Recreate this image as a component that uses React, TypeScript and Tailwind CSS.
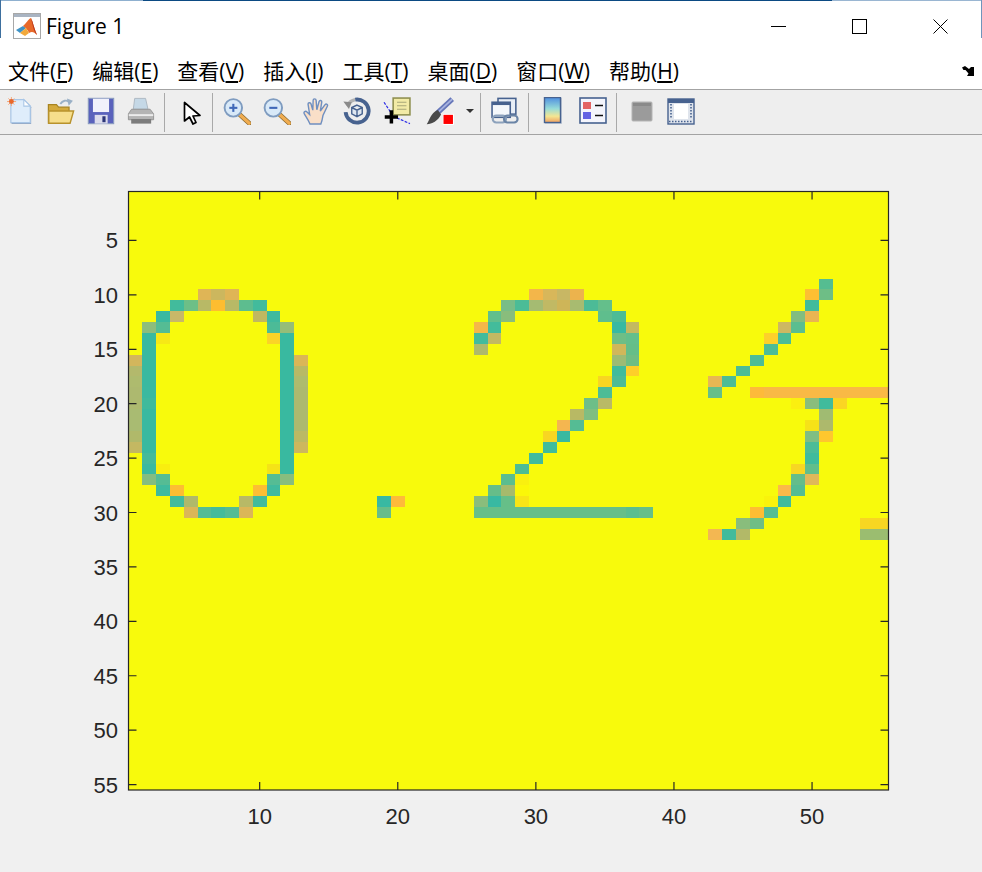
import type {ReactNode} from 'react'

const TEAL = '#39b9a0'

// image cells of the figure, row -> [column, colour]
const cells: Record<number, [number, string][]> = {
  9: [[51, '#55bd91']],
  10: [[6, '#dfb556'], [7, '#ccb75e'], [8, '#dfb556'], [30, '#f3b64a'], [31, '#d8b75a'], [32, '#c8b764'], [33, '#ecb34d'], [50, '#fdbf33'], [51, '#6ebe86']],
  11: [[4, '#42bb9c'], [5, '#6dbf87'], [6, '#b8b966'], [7, '#fdbd30'], [8, '#b8b966'], [9, '#5dbd8f'], [10, '#42bb9c'], [28, '#79bd87'], [29, '#4bbc97'], [30, '#a5bb72'], [31, '#c1b964'], [32, '#ceb558'], [33, '#a8bb70'], [34, '#4cbb97'], [35, '#64bf8b'], [50, '#41bb9c']],
  12: [[3, '#3ab9a0'], [4, '#c8b868'], [10, '#c0b860'], [11, '#3fba9e'], [27, '#62bf8c'], [28, '#89bd7c'], [35, '#5fbe8d'], [36, '#4cbc96'], [49, '#82bd80'], [50, '#e9b552']],
  13: [[2, '#8dbd7c'], [3, '#55bc94'], [11, '#4cbb97'], [12, '#95bd78'], [26, '#f5b749'], [27, '#43bc9b'], [36, '#38b9a2'], [37, '#c4b960'], [48, '#cdb862'], [49, '#5bbe90']],
  14: [[2, TEAL], [3, '#f7e816'], [11, '#fbd327'], [12, TEAL], [26, '#42bb9c'], [27, '#c2b963'], [36, '#6fbe85'], [37, '#64bf8b'], [47, '#fdd02a'], [48, '#4cbc96']],
  15: [[2, TEAL], [12, TEAL], [26, '#aeb96c'], [36, '#d0b75a'], [37, '#65be88'], [47, '#4dbc96']],
  16: [[1, '#d3b65c'], [2, TEAL], [12, TEAL], [13, '#dab657'], [36, '#9dbb74'], [37, '#6fbd83'], [46, '#4dbc96']],
  17: [[1, '#b3b96c'], [2, TEAL], [12, TEAL], [13, '#b8b966'], [36, '#41bb9c'], [37, '#fecf29'], [45, '#4cbc96']],
  18: [[1, '#aebb6e'], [2, TEAL], [12, TEAL], [13, '#aebb6e'], [35, '#f8d522'], [36, '#4cbb97'], [43, '#e7b754'], [44, '#4cbc96']],
  19: [[1, '#adb96f'], [2, '#3ab9a0'], [12, TEAL], [13, '#adb96f'], [35, '#4dbc96'], [43, '#66bf89'], [46, '#fdba3a'], [47, '#f9b945'], [48, '#f9b945'], [49, '#f9b945'], [50, '#f9b945'], [51, '#f9b945'], [52, '#f9b945'], [53, '#f9b945'], [54, '#f9b945'], [55, '#f9b945']],
  20: [[1, '#adb96f'], [2, '#3fba9c'], [12, TEAL], [13, '#adb96f'], [34, '#6dbe88'], [35, '#b9ba66'], [49, '#fbef10'], [50, '#8abd7c'], [51, '#40bb9c'], [52, '#fad523']],
  21: [[1, '#a9bb72'], [2, TEAL], [12, TEAL], [13, '#adb96f'], [33, '#b8b964'], [34, '#7fbe82'], [51, '#a0bb72']],
  22: [[1, '#a9bb72'], [2, TEAL], [12, TEAL], [13, '#adb96f'], [32, '#f4b650'], [33, '#55bc94'], [50, '#f6e218'], [51, '#adb96c']],
  23: [[1, '#b0b96a'], [2, TEAL], [12, TEAL], [13, '#bbb964'], [31, '#f8d622'], [32, '#3ab9a0'], [50, '#7fbe83'], [51, '#fec72e']],
  24: [[1, '#c4b862'], [2, TEAL], [12, TEAL], [13, '#cdb75d'], [31, '#40bc9c'], [50, '#4cbc97']],
  25: [[2, '#45ba9a'], [12, TEAL], [30, '#40bb9d'], [50, '#40bb9c']],
  26: [[2, '#3bb9a0'], [3, '#f9ee0f'], [11, '#f5e317'], [12, TEAL], [29, '#4dbc94'], [49, '#f7d723'], [50, '#61be8b']],
  27: [[2, '#84bd80'], [3, '#55bc94'], [11, '#55bc94'], [12, '#88bd7e'], [28, '#5bbd8f'], [29, '#f9f00f'], [49, '#64bd8a'], [50, '#dfb85a']],
  28: [[3, '#3fba9e'], [4, '#fdbd33'], [10, '#fdbe33'], [11, '#40ba9e'], [27, '#66bd89'], [28, '#a6ba6c'], [29, '#fbf708'], [48, '#fbb94a'], [49, '#55bc93']],
  29: [[4, '#42bb9c'], [5, '#b0b96a'], [9, '#b8b966'], [10, '#42bb9c'], [19, '#38b9a2'], [20, '#feba3a'], [26, '#8abd7c'], [27, '#38b9a2'], [28, '#66bf88'], [29, '#f8e516'], [47, '#f9f30c'], [48, '#41bb9c']],
  30: [[5, '#dbb658'], [6, '#55bc94'], [7, '#45bb9a'], [8, '#55bc94'], [9, '#dbb658'], [19, '#67bd8a'], [26, '#66bf89'], [27, '#66bf89'], [28, '#66bf89'], [29, '#66bf89'], [30, '#66bf89'], [31, '#66bf89'], [32, '#66bf89'], [33, '#66bf89'], [34, '#66bf89'], [35, '#66bf89'], [36, '#66bf89'], [37, '#5bbe8f'], [38, '#66bf89'], [46, '#febd33'], [47, '#55bd93']],
  31: [[45, '#89bd7c'], [46, '#6fbe85'], [54, '#f8d622'], [55, '#f8d622']],
  32: [[43, '#f3b752'], [44, '#41bb9c'], [45, '#b2b968'], [54, '#9bbd70'], [55, '#9bbd70']]
}

const LEFT = 128.5
const TOP = 191.5
const CELL_W = 759.5 / 55
const CELL_H = 598.5 / 55

const ticks = [10, 20, 30, 40, 50]
const yTicks = [5, 10, 15, 20, 25, 30, 35, 40, 45, 50, 55]
const xAt = (v: number) => LEFT + (v - 0.5) * CELL_W
const yAt = (v: number) => TOP + (v - 0.5) * CELL_H

function Icon({children, className}: {children: ReactNode; className?: string}) {
  return (
    <svg viewBox="0 0 16 16" className={`w-7 h-7 shrink-0 ${className ?? ''}`}>
      {children}
    </svg>
  )
}

function Sep({className}: {className: string}) {
  return <div className={`w-px h-[39px] mt-[3px] bg-[#a9a9a9] shrink-0 ${className}`} />
}

function Magnifier({minus}: {minus?: boolean}) {
  return (
    <Icon>
      <path d="M9.5 10 L15 15" stroke="#8a6a30" strokeWidth="2.6" strokeLinecap="round" />
      <path d="M9.5 10 L15 15" stroke="#f0ac50" strokeWidth="1.8" strokeLinecap="round" />
      <circle cx="5.9" cy="6.2" r="5" fill="#d8e9f8" stroke="#7f9cc0" strokeWidth="1.1" />
      <path d="M3.6 6.2 H8.2" stroke="#3f68b8" strokeWidth="1.2" />
      {!minus && <path d="M5.9 3.9 V8.5" stroke="#3f68b8" strokeWidth="1.2" />}
    </Icon>
  )
}

function MenuItem({label, hot}: {label: string; hot: string}) {
  return (
    <span>
      {label}(<span className="underline underline-offset-2">{hot}</span>)
    </span>
  )
}

function MatlabLogo() {
  return (
    <svg viewBox="0 0 28 26" className="w-7 h-[26px] shrink-0">
      <rect x="0.5" y="0.5" width="27" height="25" fill="#fff" stroke="#a8a8a8" />
      <rect x="1" y="1" width="26" height="3" fill="#a9b4c2" />
      <path d="M3 17 L10 13 L13 15 L7 20 Z" fill="#3f93c6" />
      <path d="M10 13 C13 11 15 6 18 5 C20 9 21 15 24 22 C21 19 19 18 16 20 C15 17 13 15 10 13 Z" fill="#e8692a" />
      <path d="M18 5 C20 9 21 15 24 22 C21 19 20 14 18 5 Z" fill="#b8361c" />
      <path d="M13 15 L16 20 L12 23 L7 20 Z" fill="#f2a93b" />
    </svg>
  )
}

export default function App() {
  return (
    <main className="relative w-[982px] h-[872px] bg-[#f0f0f0] flex flex-col overflow-hidden">
      {/* window edge */}
      <div className="absolute left-0 top-0 w-px h-[38px] bg-[#3d6f9e]" />
      <div className="absolute right-0 top-0 w-px h-[38px] bg-[#6f95bb]" />

      <div className="flex h-px shrink-0">
        <div className="w-[143px] bg-[#8fb0cf]" />
        <div className="w-[689px] bg-[#0b4a83]" />
        <div className="flex-1 bg-[#9ab6d2]" />
      </div>

      {/* title bar */}
      <header className="h-[47px] shrink-0 bg-white flex items-center pl-[13px] pt-[3px]">
        <MatlabLogo />
        <span className="ml-[5px] text-[21px] leading-none text-black font-['Open_Sans',sans-serif]">Figure 1</span>
        <div className="ml-auto mt-px flex items-center">
          <svg viewBox="0 0 15 15" className="w-[15px] h-[15px] mr-[66px]">
            <path d="M0 7.5 H15" stroke="#000" />
          </svg>
          <svg viewBox="0 0 15 15" className="w-[15px] h-[15px] mr-[66px]">
            <rect x="0.5" y="0.5" width="14" height="14" fill="none" stroke="#000" />
          </svg>
          <svg viewBox="0 0 15 15" className="w-[15px] h-[15px] mr-[34px]">
            <path d="M0.5 0.5 L14.5 14.5 M14.5 0.5 L0.5 14.5" stroke="#000" />
          </svg>
        </div>
      </header>

      {/* menu bar */}
      <nav className="h-[41px] shrink-0 bg-white flex items-center pl-[8px] pr-[8px] pt-[5px] gap-[19px] text-[21px] leading-none text-black font-['Open_Sans','Noto_Sans_CJK_SC',sans-serif]">
        <MenuItem label="文件" hot="F" />
        <MenuItem label="编辑" hot="E" />
        <MenuItem label="查看" hot="V" />
        <MenuItem label="插入" hot="I" />
        <MenuItem label="工具" hot="T" />
        <MenuItem label="桌面" hot="D" />
        <MenuItem label="窗口" hot="W" />
        <MenuItem label="帮助" hot="H" />
        <svg viewBox="0 0 12 10" className="ml-auto w-3 h-[10px]">
          <path d="M0 1.5 L3 0 L7 3 L9 1 L12 1 L12 10 L5 10 L6.5 7.5 L3.5 4 L1.5 4 Z" fill="#000" />
        </svg>
      </nav>

      {/* toolbar */}
      <div className="h-[46px] shrink-0 bg-[#eeeeee] border-y border-[#a3a3a3] flex items-center pl-[7px] pb-[2px]">
        <div className="flex gap-3">
          <Icon>
            <path d="M2.6 2 H10 L13.8 5.8 V15.4 H2.6 Z" fill="#8fa3c0" />
            <path d="M2.2 1.5 H9.6 L13.3 5.2 V14.6 H2.2 Z" fill="#dfedfb" stroke="#a9c6e6" strokeWidth="0.7" />
            <path d="M9.6 1.5 V5.2 H13.3 Z" fill="#fff" stroke="#a9c6e6" strokeWidth="0.6" />
            <path d="M2.5 0 V5.2 M0 2.6 H5.2 M0.8 0.8 L4.2 4.4 M4.2 0.8 L0.8 4.4" stroke="#f4a070" strokeWidth="0.5" />
            <circle cx="2.5" cy="2.6" r="1.4" fill="#e8682c" />
          </Icon>
          <Icon>
            <path d="M0.8 4.4 H5.4 L6.6 5.8 H12.6 V15 H0.8 Z" fill="#d4aa3c" stroke="#a88420" strokeWidth="0.7" />
            <path d="M1 8 H15.2 L13.2 15 H1 Z" fill="#f6de8c" stroke="#b8922c" strokeWidth="0.8" />
            <path d="M7.6 4 C9 1.8 11 1.6 12.6 2.8" fill="none" stroke="#9ab0c6" strokeWidth="1.1" />
            <path d="M11.4 0.8 L14.8 2.2 L12.4 5 Z" fill="#9ab0c6" />
          </Icon>
          <Icon>
            <rect x="0.8" y="0.8" width="14.4" height="14.4" fill="#5a62bc" stroke="#8a9ac0" strokeWidth="0.7" />
            <rect x="3.4" y="1" width="9.2" height="7.6" fill="#f1f1fb" />
            <rect x="4.4" y="10.2" width="7.4" height="5" fill="#dcdcec" />
            <rect x="8.8" y="11" width="1.8" height="3.4" fill="#2c3678" />
          </Icon>
          <Icon>
            <path d="M4.4 0.8 H10.6 L12 7 H3.6 Z" fill="#c5d8e6" stroke="#a8b4be" strokeWidth="0.5" />
            <path d="M2.6 7 H13.2 L15.2 9.6 V13 H0.8 V9.6 Z" fill="#b4b4b4" stroke="#909090" strokeWidth="0.5" />
            <rect x="1" y="9.8" width="14" height="1.1" fill="#ececec" />
            <rect x="2.4" y="12.6" width="11.4" height="2.6" fill="#7c7c7c" />
          </Icon>
        </div>
        <Sep className="ml-[9px] mr-[13px]" />
        <svg viewBox="0 0 28 28" className="w-7 h-7 shrink-0">
          <path d="M6.5 5.5 V24 L11.5 20 L15 27 L18 25.5 L15 19 L22 18.5 Z" fill="#fff" stroke="#000" strokeWidth="1.7" strokeLinejoin="round" />
        </svg>
        <Sep className="ml-[6px] mr-[10px]" />
        <div className="flex gap-3">
          <Magnifier />
          <Magnifier minus />
          <Icon>
            <path
              d="M4 15.4 C3 13 1.5 11 0.7 9.5 C0.2 8.5 1.4 7.7 2.3 8.6 L3.8 10 L2.9 4.2 C2.8 3.1 4.3 2.9 4.6 4 L5.6 7.5 L5.8 1.9 C5.8 0.8 7.4 0.8 7.5 1.9 L7.9 7.3 L9.2 2.6 C9.5 1.6 10.9 1.9 10.7 3 L9.9 8 L12.6 4.4 C13.3 3.6 14.4 4.4 13.9 5.3 L11.4 10.6 C11.1 12.4 10.8 14 10.2 15.4 Z"
              fill="#f9dfc8"
              stroke="#6f8fc0"
              strokeWidth="0.8"
            />
          </Icon>
          <Icon>
            <path d="M2.4 5 A6.6 6.6 0 0 1 7 1.5" fill="none" stroke="#b4b4b4" strokeWidth="1.8" />
            <path d="M7 1.5 A6.6 6.6 0 1 1 1.5 8.6" fill="none" stroke="#47628f" strokeWidth="2.2" />
            <path d="M0.2 2.6 L5 3 L3.4 6.8 Z" fill="#8a8a8a" />
            <path d="M8 4.6 L11 6 V9.6 L8 11.2 L5 9.6 V6 Z M5 6 L8 7.5 L11 6 M8 7.5 V11.2" fill="#dfe7f0" stroke="#47628f" strokeWidth="0.8" />
          </Icon>
          <Icon>
            <rect x="5.8" y="0.6" width="9.6" height="9.6" fill="#f2eba6" stroke="#8f9050" strokeWidth="0.9" />
            <path d="M8 3 H13.4 M8 5 H13.4 M8 7 H13.4" stroke="#a8a878" strokeWidth="0.7" />
            <path d="M0.6 3 L5 9.6 M8 12 L15.4 15.2" stroke="#2b2be6" strokeWidth="0.7" strokeDasharray="1.6 0.8" fill="none" />
            <path d="M4.8 7.6 V15.2 M1 11.4 H8.6" stroke="#000" strokeWidth="2" />
          </Icon>
        </div>
        <Icon className="ml-[15px]">
          <path d="M15 1.2 L6.4 9.2" stroke="#6676b8" strokeWidth="3" />
          <path d="M15 1.2 L6.8 8.8" stroke="#a9b4e0" strokeWidth="1" />
          <path d="M6.8 7.4 L8.6 10 C6.8 13.6 3.6 15.4 0.4 15.6 C2 13.4 2.4 9.2 6.8 7.4 Z" fill="#4a4a4a" />
          <rect x="9.6" y="9.6" width="6.4" height="6.4" fill="#fff" />
          <rect x="10" y="10.2" width="5.4" height="5.2" fill="#ff0000" />
        </Icon>
        <svg viewBox="0 0 8 4" className="ml-3 w-2 h-1 shrink-0">
          <path d="M0 0 H8 L4 4 Z" fill="#333" />
        </svg>
        <Sep className="ml-[6px] mr-[10px]" />
        <Icon>
          <rect x="4" y="0.8" width="10.2" height="9" fill="#e8eef6" stroke="#47628f" strokeWidth="0.9" />
          <rect x="0.6" y="3" width="10.4" height="8.6" fill="#f4f7fb" stroke="#47628f" strokeWidth="0.9" />
          <rect x="0.6" y="3" width="10.4" height="1.6" fill="#47628f" />
          <rect x="1" y="10.6" width="7.6" height="4" rx="2" fill="none" stroke="#8da2bc" strokeWidth="1.2" />
          <rect x="7.4" y="10.6" width="7.8" height="4" rx="2" fill="none" stroke="#6a84a6" strokeWidth="1.2" />
        </Icon>
        <Sep className="ml-[9px] mr-[10px]" />
        <svg viewBox="0 0 28 28" className="w-7 h-7 shrink-0">
          <defs>
            <linearGradient id="cbar" x1="0" y1="0" x2="0" y2="1">
              <stop offset="0" stopColor="#4f8fe0" />
              <stop offset="0.45" stopColor="#97dcd8" />
              <stop offset="0.75" stopColor="#f3e692" />
              <stop offset="1" stopColor="#f0a060" />
            </linearGradient>
          </defs>
          <rect x="6" y="1" width="17" height="26" fill="#c4ccd8" />
          <rect x="5.5" y="0.5" width="16" height="25" fill="url(#cbar)" stroke="#47628f" strokeWidth="1.4" />
        </svg>
        <svg viewBox="0 0 28 28" className="ml-3 w-7 h-7 shrink-0">
          <rect x="1" y="1" width="26" height="25" fill="#f4f5fc" stroke="#47628f" strokeWidth="1.6" />
          <rect x="4" y="5" width="8" height="7" fill="#e36464" />
          <rect x="4" y="15" width="8" height="7" fill="#6464e3" />
          <path d="M16 8.5 H24 M16 18.5 H24" stroke="#111" strokeWidth="1.4" />
        </svg>
        <Sep className="ml-[9px] mr-[11px]" />
        <svg viewBox="0 0 28 28" className="w-7 h-7 shrink-0">
          <rect x="4" y="5" width="20" height="19" rx="1" fill="#9b9b9b" stroke="#b4b4b4" />
          <rect x="5" y="6" width="18" height="3" fill="#8a8a8a" />
        </svg>
        <svg viewBox="0 0 28 28" className="ml-[11px] w-7 h-7 shrink-0">
          <rect x="1" y="2" width="26" height="25" fill="#dfe4ec" stroke="#47628f" strokeWidth="1.4" />
          <rect x="1" y="2" width="26" height="4" fill="#47628f" />
          <rect x="7" y="7" width="14" height="15" fill="#fff" />
          <path d="M4 7 V22 M24 7 V22 M2 24.5 H26" stroke="#47628f" strokeWidth="1.6" strokeDasharray="1.5 1.5" />
        </svg>
      </div>

      {/* figure canvas */}
      <svg viewBox="0 135 982 737" className="w-[982px] flex-1">
        <rect x={LEFT} y={TOP} width={759.5} height={598.5} fill="#f8fa0c" />
        <g shapeRendering="crispEdges">
          {Object.entries(cells).flatMap(([row, list]) =>
            list.map(([col, color]) => (
              <rect
                key={`${row}-${col}`}
                x={LEFT + (col - 1) * CELL_W}
                y={TOP + (Number(row) - 1) * CELL_H}
                width={CELL_W}
                height={CELL_H}
                fill={color}
              />
            ))
          )}
        </g>
        <rect x={128.5} y={191.5} width={760} height={598.5} fill="none" stroke="#262626" strokeWidth="1.2" />
        {yTicks.map(v => (
          <g key={v}>
            <path d={`M128.5 ${yAt(v)} h8 M888.5 ${yAt(v)} h-8`} stroke="#262626" strokeWidth="1.2" />
            <text x={118} y={yAt(v) + 8} textAnchor="end" className="text-[22px] fill-[#262626] font-['Liberation_Sans',sans-serif]">
              {v}
            </text>
          </g>
        ))}
        {ticks.map(v => (
          <g key={v}>
            <path d={`M${xAt(v)} 790 v-8 M${xAt(v)} 191.5 v8`} stroke="#262626" strokeWidth="1.2" />
            <text x={xAt(v)} y={824} textAnchor="middle" className="text-[22px] fill-[#262626] font-['Liberation_Sans',sans-serif]">
              {v}
            </text>
          </g>
        ))}
      </svg>
    </main>
  )
}
